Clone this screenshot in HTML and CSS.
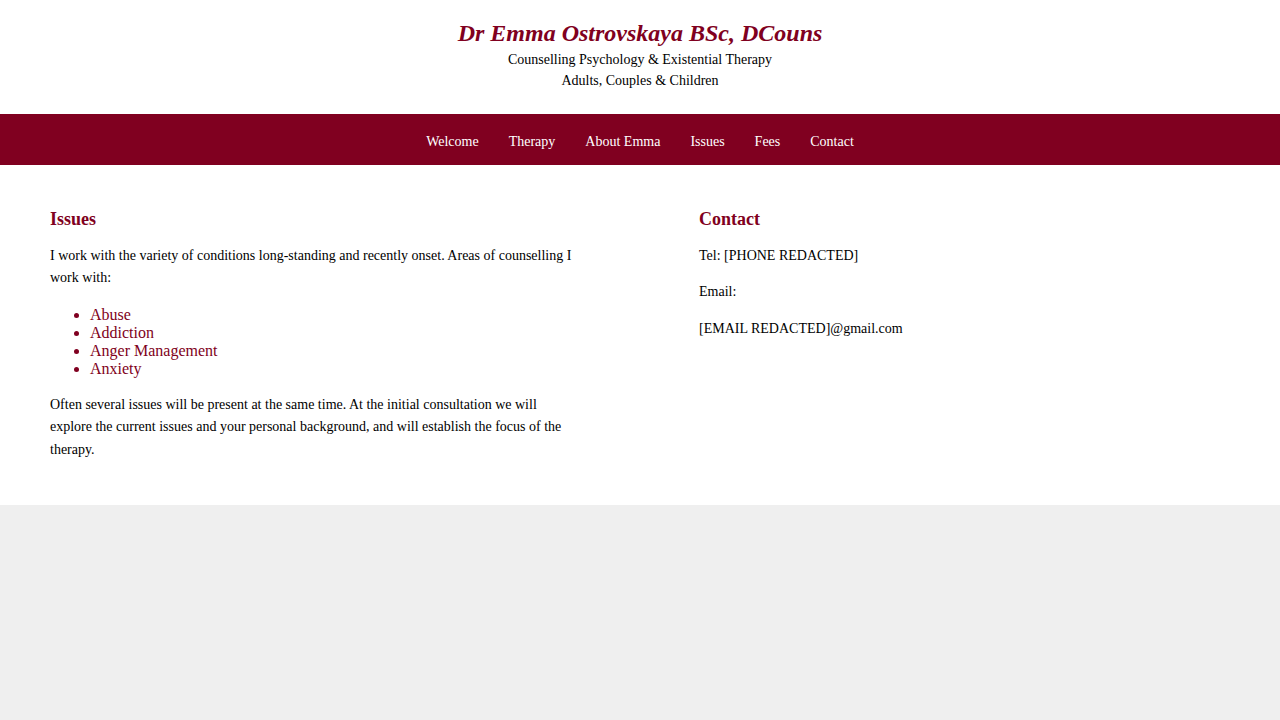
FILE: index.html
```html
<!DOCTYPE html>
<html lang="en">
<head>
<meta charset="utf-8">
<title>Dr Emma Ostrovskaya</title>
<link rel="stylesheet" href="styles.css">
</head>
<body>
<div class="page">
  <header class="site-header">
    <h1 class="site-title">Dr Emma Ostrovskaya BSc, DCouns</h1>
    <p class="tagline">Counselling Psychology &amp; Existential Therapy</p>
    <p class="tagline">Adults, Couples &amp; Children</p>
  </header>
  <nav class="site-nav">
    <a href="#">Welcome</a>
    <a href="#">Therapy</a>
    <a href="#">About Emma</a>
    <a href="#">Issues</a>
    <a href="#">Fees</a>
    <a href="#">Contact</a>
  </nav>
  <main class="content">
    <section class="col">
      <h3>Issues</h3>
      <p>I work with the variety of conditions long-standing and recently onset. Areas of counselling I work with:</p>
      <ul class="issues">
        <li>Abuse</li>
        <li>Addiction</li>
        <li>Anger Management</li>
        <li>Anxiety</li>
      </ul>
      <p>Often several issues will be present at the same time. At the initial consultation we will explore the current issues and your personal background, and will establish the focus of the therapy.</p>
    </section>
    <section class="col">
      <h3>Contact</h3>
      <p>Tel: [PHONE REDACTED]</p>
      <p>Email:</p>
      <p>[EMAIL REDACTED]@gmail.com</p>
    </section>
  </main>
</div>
</body>
</html>
```

FILE: styles.css
```css
html, body {
  margin: 0;
  padding: 0;
  background: #efefef;
  font-family: "Liberation Serif", "Times New Roman", serif;
  color: #000;
}

.page {
  background: #fff;
}

.site-header {
  padding: 18px 0 23px;
  text-align: center;
}

.site-title {
  margin: 0 0 1px;
  font-size: 24px;
  line-height: 30px;
  font-style: italic;
  font-weight: bold;
  color: #800020;
}

.tagline {
  margin: 0;
  font-size: 14px;
  line-height: 21px;
}

.site-nav {
  background: #800020;
  display: flex;
  justify-content: center;
}

.site-nav a {
  color: #fff;
  text-decoration: none;
  font-size: 14px;
  line-height: 19px;
  padding: 18px 15px 14px;
}

.content {
  display: flex;
  justify-content: space-between;
  padding: 44px 50px 44px;
}

.col {
  width: 45%;
}

.col h3 {
  margin: 0 0 16px;
  font-size: 18px;
  line-height: 20px;
  color: #800020;
}

.col p {
  margin: 0 0 14px;
  font-size: 14px;
  line-height: 22.4px;
}

.col p:last-child {
  margin-bottom: 0;
}

.issues {
  margin: 16px 0;
  padding-left: 40px;
  font-size: 16px;
  line-height: 18px;
  color: #800020;
}
```
